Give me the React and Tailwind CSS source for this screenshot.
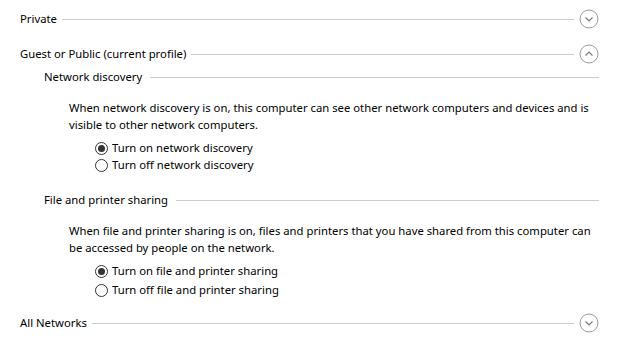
import React from 'react';

function Chevron({ up = false }) {
  return (
    <svg width="20" height="20" viewBox="0 0 20 20" className="shrink-0">
      <circle cx="10" cy="10" r="9" fill="none" stroke="#9a9a9a" strokeWidth="1" />
      {up ? (
        <path d="M6.5 11.5 L10 8 L13.5 11.5" fill="none" stroke="#7a7a7a" strokeWidth="1.2" />
      ) : (
        <path d="M6.5 8.5 L10 12 L13.5 8.5" fill="none" stroke="#7a7a7a" strokeWidth="1.2" />
      )}
    </svg>
  );
}

function Header({ label, up, className = '' }) {
  return (
    <div className={`flex h-[20px] items-center pl-[20px] pr-[24px] ${className}`}>
      <span className="whitespace-nowrap">{label}</span>
      <div className="ml-[5px] mr-[5px] h-px flex-1 bg-[#cccccc]" />
      <Chevron up={up} />
    </div>
  );
}

function SubHeader({ label, className = '' }) {
  return (
    <div className={`flex h-[20px] items-center pl-[44px] pr-[24px] ${className}`}>
      <span className="whitespace-nowrap">{label}</span>
      <div className="ml-[8px] h-px flex-1 bg-[#cccccc]" />
    </div>
  );
}

function Radio({ label, checked }) {
  return (
    <div className="flex h-full items-center pl-[95px]">
      <span className="flex h-[13px] w-[13px] items-center justify-center rounded-full border border-[#333333]">
        {checked && <span className="h-[7px] w-[7px] rounded-full bg-[#333333]" />}
      </span>
      <span className="ml-[4px] whitespace-nowrap">{label}</span>
    </div>
  );
}

export default function App() {
  return (
    <div
      className="h-[358px] w-[623px] overflow-hidden bg-white text-[11.3px] text-black"
      style={{ fontFamily: '"Noto Sans", sans-serif' }}
    >
      <Header label="Private" className="mt-[9px]" />
      <Header label="Guest or Public (current profile)" up className="mt-[15px]" />
      <SubHeader label="Network discovery" className="mt-[3px]" />
      <p className="mt-[12px] pl-[69px] leading-[17px] whitespace-nowrap">
        When network discovery is on, this computer can see other network computers and devices and is
        <br />
        visible to other network computers.
      </p>
      <div className="mt-[7px] h-[17px]">
        <Radio label="Turn on network discovery" checked />
      </div>
      <div className="h-[17px]">
        <Radio label="Turn off network discovery" />
      </div>
      <SubHeader label="File and printer sharing" className="mt-[16px]" />
      <p className="mt-[12px] pl-[69px] leading-[17px] whitespace-nowrap">
        When file and printer sharing is on, files and printers that you have shared from this computer can
        <br />
        be accessed by people on the network.
      </p>
      <div className="mt-[6px] h-[19px]">
        <Radio label="Turn on file and printer sharing" checked />
      </div>
      <div className="h-[19px]">
        <Radio label="Turn off file and printer sharing" />
      </div>
      <Header label="All Networks" className="mt-[13px]" />
    </div>
  );
}
